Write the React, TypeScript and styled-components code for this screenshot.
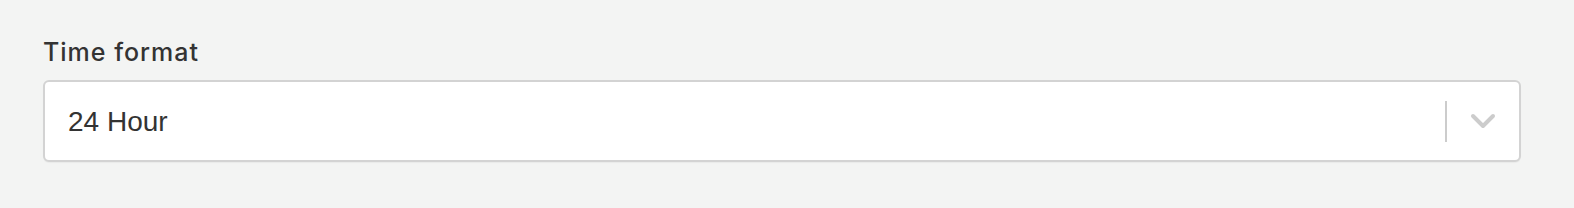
import React from "react";
import styled, { createGlobalStyle } from "styled-components";

const GlobalStyle = createGlobalStyle`
  html, body {
    margin: 0;
    padding: 0;
    background: #f3f4f3;
    overflow: hidden;
  }
  body {
    font-family: Inter, "Liberation Sans", sans-serif;
  }
`;

const Page = styled.div`
  box-sizing: border-box;
  width: 100%;
  height: 208px;
  padding: 36px 53px 0 43px;
`;

const Field = styled.div`
  display: flex;
  flex-direction: column;
  gap: 12px;
`;

const Label = styled.label`
  font-size: 25px;
  font-weight: 500;
  letter-spacing: 1px;
  color: #333;
  line-height: 32px;
`;

const Control = styled.div`
  box-sizing: border-box;
  display: flex;
  align-items: center;
  height: 82px;
  background: #fff;
  border: 2px solid #d3d3d3;
  border-radius: 6px;
  box-shadow: 0 1px 1px rgba(0, 0, 0, 0.04);
`;

const Value = styled.div`
  flex: 1;
  padding: 2px 0 0 23px;
  font-family: "Liberation Sans", Arial, sans-serif;
  font-size: 28px;
  color: #333;
`;

const Indicators = styled.div`
  display: flex;
  align-items: center;
  align-self: stretch;
`;

const Separator = styled.span`
  width: 2px;
  height: 41px;
  background: #cccccc;
`;

const Chevron = styled.div`
  display: flex;
  padding: 0 23px 0 23px;
  color: #cccccc;
`;

export default function App() {
  return (
    <>
      <GlobalStyle />
      <Page>
        <Field>
          <Label>Time format</Label>
          <Control>
            <Value>24 Hour</Value>
            <Indicators>
              <Separator />
              <Chevron>
                <svg width="26" height="16" viewBox="0 0 26 16" fill="none">
                  <path d="M3 3l10 10 10-10" stroke="currentColor" strokeWidth="4" strokeLinecap="round" strokeLinejoin="round" />
                </svg>
              </Chevron>
            </Indicators>
          </Control>
        </Field>
      </Page>
    </>
  );
}
